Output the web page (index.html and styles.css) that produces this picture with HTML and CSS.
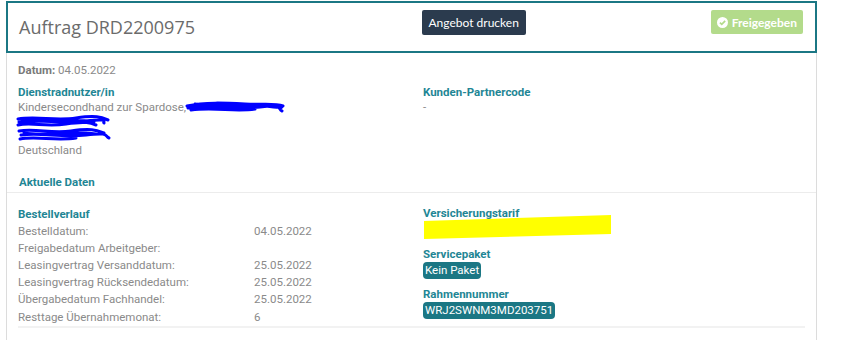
FILE: index.html
```html
<!DOCTYPE html>
<html lang="de">
<head>
    <meta charset="UTF-8">
    <title>Auftrag DRD2200975</title>
    <link rel="stylesheet" href="styles.css">
</head>
<body>
    <div class="panel">
        <div class="panel-header">
            <h1 class="order-title">Auftrag DRD2200975</h1>
            <div class="header-actions">
                <button class="btn btn-print">Angebot drucken</button>
                <span class="btn btn-approved">
                    <svg width="11" height="11" viewBox="0 0 12 12" aria-hidden="true">
                        <circle cx="6" cy="6" r="6" fill="#fff"/>
                        <path d="M3.2 6.2 L5.2 8.1 L8.9 4.2" fill="none" stroke="#b3db8b" stroke-width="1.8"/>
                    </svg>
                    Freigegeben
                </span>
            </div>
        </div>

        <div class="panel-body">
            <p class="date-line"><b>Datum:</b> 04.05.2022</p>

            <div class="two-cols">
                <div>
                    <h3 class="label">Dienstradnutzer/in</h3>
                    <div class="address">
                        <div>Kindersecondhand zur Spardose, <svg class="scribble-inline" width="100" height="12" viewBox="0 0 100 12">
                            <path d="M2 5 C20 1 40 2 60 3 S90 2 98 5 M3 7 C25 4 50 9 75 6 S92 8 97 10 M10 3 C35 8 55 2 80 5 S94 4 96 7 M6 9 C30 6 50 11 70 8 M20 4 C40 1 60 7 88 4" fill="none" stroke="#0000ff" stroke-width="3" stroke-linecap="round"/>
                        </svg></div>
                        <svg class="scribble-block" width="96" height="28" viewBox="0 0 96 28">
                            <path d="M2 4 C20 1 40 6 60 3 S85 2 92 5 M3 7 C25 4 45 9 70 6 S86 7 88 8 M2 10 C15 7 30 12 50 9 S75 8 80 10 M6 5 C30 9 55 2 78 7" fill="none" stroke="#0000ff" stroke-width="3" stroke-linecap="round"/>
                            <path d="M3 16 C20 13 35 19 55 16 S80 15 88 18 M5 20 C25 17 45 23 70 20 S88 21 93 23 M4 24 C20 21 40 26 60 23 M8 18 C30 22 50 15 80 19" fill="none" stroke="#0000ff" stroke-width="3" stroke-linecap="round"/>
                        </svg>
                        <div>Deutschland</div>
                    </div>
                </div>
                <div>
                    <h3 class="label">Kunden-Partnercode</h3>
                    <div class="value">-</div>
                </div>
            </div>

            <h3 class="label section-title">Aktuelle Daten</h3>
        </div>

        <div class="panel-body details">
            <div class="two-cols">
                <div>
                    <h3 class="label">Bestellverlauf</h3>
                    <div class="history">
                        <span>Bestelldatum:</span><span>04.05.2022</span>
                        <span>Freigabedatum Arbeitgeber:</span><span></span>
                        <span>Leasingvertrag Versanddatum:</span><span>25.05.2022</span>
                        <span>Leasingvertrag Rücksendedatum:</span><span>25.05.2022</span>
                        <span>Übergabedatum Fachhandel:</span><span>25.05.2022</span>
                        <span>Resttage Übernahmemonat:</span><span>6</span>
                    </div>
                </div>
                <div>
                    <div class="info-block">
                        <h3 class="label">Versicherungstarif</h3>
                        <svg class="highlight" width="190" height="24" viewBox="0 0 190 24">
                            <polygon points="1,6 188,0 188,19 1,24" fill="#ffff00"/>
                        </svg>
                    </div>
                    <div class="info-block">
                        <h3 class="label">Servicepaket</h3>
                        <span class="badge">Kein Paket</span>
                    </div>
                    <div class="info-block">
                        <h3 class="label">Rahmennummer</h3>
                        <span class="badge">WRJ2SWNM3MD203751</span>
                    </div>
                </div>
            </div>
        </div>
    </div>
</body>
</html>
```

FILE: styles.css
```css
* {
    margin: 0;
    padding: 0;
    box-sizing: border-box;
}

body {
    background: #fff;
    font-family: Roboto, "Liberation Sans", sans-serif;
    font-size: 11.5px;
    color: #8a8a8a;
}

.panel {
    width: 811px;
    margin: 1px 0 0 6px;
    border-left: 1px solid #dcdcdc;
    border-right: 1px solid #dcdcdc;
    min-height: 339px;
}

.panel-header {
    margin: 0 -1px;
    height: 52px;
    border: 2px solid #1b7784;
    display: grid;
    grid-template-columns: 1fr 1fr;
    column-gap: 21px;
    padding: 0 12px 0 11px;
}

.order-title {
    font-family: "Open Sans", sans-serif;
    font-weight: 400;
    font-size: 18px;
    color: #6b6b6b;
    align-self: center;
}

.header-actions {
    display: flex;
    justify-content: space-between;
    align-items: flex-start;
    padding-top: 7px;
}

.btn {
    font-family: Lato, sans-serif;
    font-size: 12px;
    color: #fff;
    border: none;
    border-radius: 2px;
    height: 25px;
    display: inline-flex;
    align-items: center;
    padding: 0 7px;
}

.btn-print {
    background: #2b3b4e;
}

.btn-approved {
    background: #b3db8b;
    font-weight: 700;
    gap: 4px;
    padding: 0 6px 0 6px;
    height: 24px;
}

.panel-body {
    padding: 10px 11px 0 11px;
}

.date-line {
    line-height: 15px;
    color: #8a8a8a;
}

.date-line b {
    color: #7a7a7a;
}

.two-cols {
    display: grid;
    grid-template-columns: 1fr 1fr;
    column-gap: 23px;
}

.label {
    font-size: 11.5px;
    font-weight: 700;
    color: #1f8695;
    line-height: 15px;
}

.date-line + .two-cols {
    margin-top: 7px;
}

.address {
    line-height: 15px;
}

.scribble-inline {
    vertical-align: -2px;
    margin-left: -4px;
}

.scribble-block {
    display: block;
    margin-left: -2px;
}

.value {
    line-height: 15px;
}

.section-title {
    margin: 17px 0 0 1px;
    padding-bottom: 2px;
}

.details {
    border-top: 1px solid #ececec;
    padding-top: 14px;
}

.details .two-cols {
    border-bottom: 2px solid #f2f2f2;
    padding-bottom: 1px;
}

.history {
    display: grid;
    grid-template-columns: 236px auto;
    grid-auto-rows: 17.2px;
    align-items: center;
}

.info-block {
    margin-bottom: 8px;
}

.info-block:first-child {
    margin-top: -1px;
}

.info-block:last-child {
    margin-bottom: 0;
}

.highlight {
    display: block;
    margin-top: -6px;
}

.badge {
    display: inline-block;
    background: #1b7784;
    color: #fff;
    border-radius: 4px;
    padding: 1px 2px;
    line-height: 15px;
    font-size: 11.5px;
}
```
